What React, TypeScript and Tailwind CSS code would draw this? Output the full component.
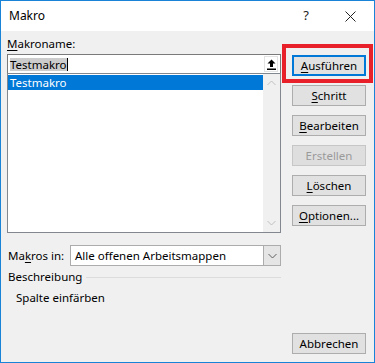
import React from 'react'

function Btn({ label, ul, primary, disabled }: { label: string; ul?: number; primary?: boolean; disabled?: boolean }) {
  const chars = label.split('')
  return (
    <div
      className={
        'h-[21px] w-[74px] flex items-center justify-center leading-none ' +
        (primary
          ? 'border-2 border-[#0078d7] bg-[#e1e1e1] text-black'
          : disabled
            ? 'border border-[#c6c6c6] bg-[#dedede] text-[#9a9a9a]'
            : 'border border-[#adadad] bg-[#e1e1e1] text-black')
      }
    >
      <span>
        {chars.map((c, i) =>
          i === ul ? (
            <span key={i} className="underline underline-offset-2">
              {c}
            </span>
          ) : (
            c
          )
        )}
      </span>
    </div>
  )
}

function Chevron({ up, color }: { up?: boolean; color: string }) {
  return (
    <svg width="9" height="6" viewBox="0 0 9 6">
      <path d={up ? 'M0.5 5L4.5 1L8.5 5' : 'M0.5 1L4.5 5L8.5 1'} fill="none" stroke={color} strokeWidth="1" />
    </svg>
  )
}

export default function App() {
  return (
    <div className="relative w-[375px] h-[363px] border border-[#1883d7] bg-[#f0f0f0] flex flex-col font-['Noto_Sans',sans-serif] text-[11.5px] text-black">
      {/* title bar */}
      <div className="h-[30px] bg-white flex items-center pl-[8px]">
        <span className="text-[12px]">Makro</span>
        <span className="ml-auto mr-[36px] text-[13px] text-[#222]">?</span>
        <svg width="11" height="11" viewBox="0 0 11 11" className="mr-[18px]">
          <path d="M0.5 0.5L10.5 10.5M10.5 0.5L0.5 10.5" stroke="#222" strokeWidth="1" />
        </svg>
      </div>

      <div className="flex-1 flex px-[6px]">
        {/* left column */}
        <div className="w-[274px] flex flex-col pt-[5px]">
          <div className="h-[16px] leading-[16px]">
            <span className="underline underline-offset-2">M</span>akroname:
          </div>
          <div className="mt-[2px] h-[20px] border border-[#7a7a7a] bg-white flex items-center">
            <span className="ml-[2px] bg-[#cccccc] leading-[13px]">Testmakro</span>
            <span className="w-px h-[13px] bg-black" />
            <div className="ml-auto mr-[2px] w-[14px] h-[16px] border border-[#e3e3e3] flex items-center justify-center">
              <svg width="9" height="11" viewBox="0 0 9 11">
                <path d="M4.5 0.5L8.5 4.5H6V8H3V4.5H0.5Z" fill="#000" />
                <rect x="0" y="9.5" width="9" height="1.5" fill="#000" />
              </svg>
            </div>
          </div>
          <div className="-mt-px h-[160px] border border-[#828790] bg-white flex">
            <div className="flex-1 pt-px">
              <div className="h-[15px] bg-[#0078d7] text-white leading-[15px] pl-[2px]">Testmakro</div>
            </div>
            <div className="w-[17px] bg-[#f0f0f0] flex flex-col items-center justify-between py-[6px]">
              <Chevron up color="#c0c0c0" />
              <Chevron color="#c0c0c0" />
            </div>
          </div>

          <div className="mt-[12px] flex items-center">
            <span className="ml-[1px] w-[62px]">
              Ma<span className="underline underline-offset-2">k</span>ros in:
            </span>
            <div className="flex-1 h-[21px] border border-[#acacac] bg-white flex items-center">
              <span className="ml-[4px]">Alle offenen Arbeitsmappen</span>
              <div className="ml-auto w-[17px] h-full bg-[#e5e5e5] border-l border-[#acacac] flex items-center justify-center">
                <Chevron color="#606060" />
              </div>
            </div>
          </div>

          <div className="mt-[3px] h-[16px] flex items-center">
            <span className="ml-[1px]">Beschreibung</span>
            <div className="flex-1 ml-[4px] h-px bg-[#dcdcdc]" />
          </div>
          <div className="mt-[5px] h-[16px] leading-[16px] pl-[9px]">Spalte einfärben</div>
        </div>

        {/* right column */}
        <div className="ml-[11px] w-[74px] flex flex-col pt-[24px] pb-[8px] gap-[9px]">
          <Btn label="Ausführen" ul={0} primary />
          <Btn label="Schritt" ul={0} />
          <Btn label="Bearbeiten" ul={0} />
          <Btn label="Erstellen" disabled />
          <Btn label="Löschen" ul={0} />
          <Btn label="Optionen..." ul={0} />
          <div className="mt-auto">
            <Btn label="Abbrechen" />
          </div>
        </div>
      </div>

      {/* red highlight annotation */}
      <div className="absolute left-[281px] top-[43px] w-[91px] h-[39px] border-4 border-[#e8202a]" />
    </div>
  )
}
